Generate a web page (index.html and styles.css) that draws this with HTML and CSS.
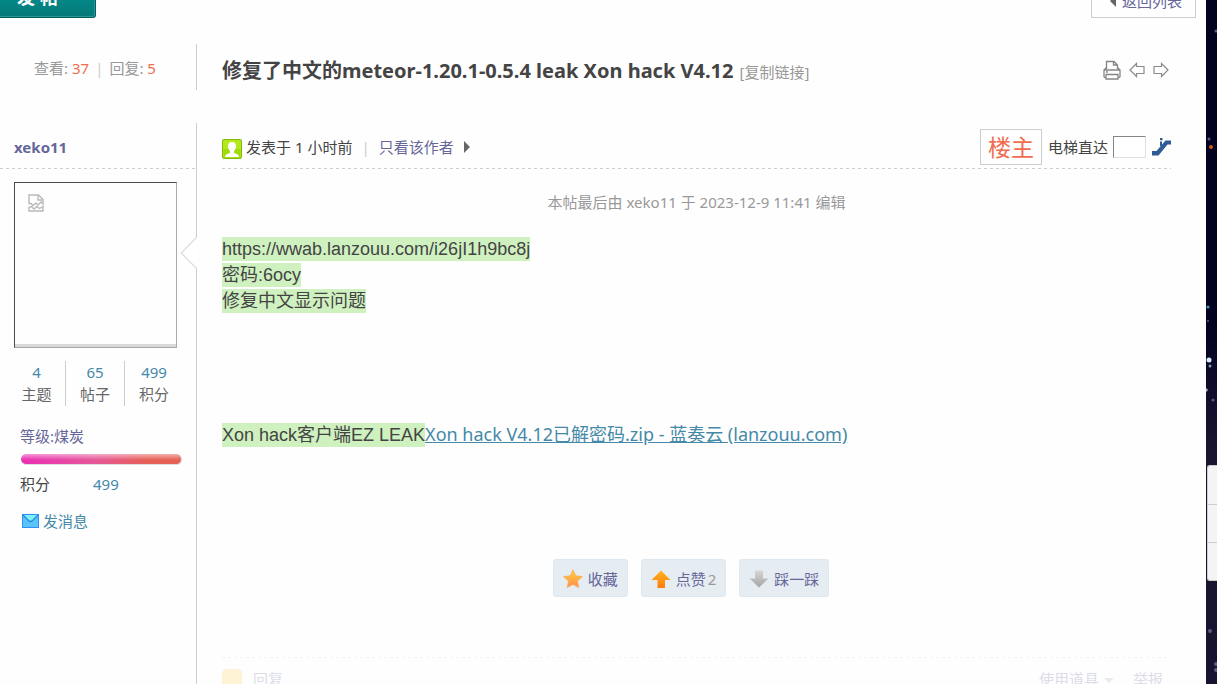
FILE: index.html
```html
<!DOCTYPE html>
<html lang="zh-CN">
<head>
<meta charset="utf-8">
<title>修复了中文的meteor-1.20.1-0.5.4 leak Xon hack V4.12</title>
<link rel="stylesheet" href="styles.css">
</head>
<body>
<div class="page">
  <main class="sheet">
    <div class="topbar">
      <button class="new-post" type="button">发 帖<span class="new-post-caret"></span></button>
      <a class="back" href="#"><span class="tri-left"></span>返回列表</a>
    </div>

    <header class="thread-head">
      <div class="counts">查看: <b>37</b><i>|</i>回复: <b>5</b></div>
      <div class="title-row">
        <h1 class="title">修复了中文的meteor-1.20.1-0.5.4 leak Xon hack V4.12</h1>
        <a class="copy" href="#">[复制链接]</a>
        <nav class="tools">
          <a href="#" aria-label="打印"><svg width="18" height="20" viewBox="0 0 18 20" fill="none" stroke="#858585" stroke-width="1.300"><path d="M3.500 9V1.500h7.500l3.500 3.500V9M10.500 1.500V5h4"/><path d="M3.500 7.500L1 10v6.500q0 1 1.500 1M14.500 7.500L17 10v6.500q0 1-1.500 1M1.500 10h15M3 12h2M3 14.500h12v4.500H3z"/></svg></a>
          <a href="#" aria-label="上一主题"><svg width="16" height="16" viewBox="0 0 16 16" fill="none" stroke="#8c8c8c" stroke-width="1.200"><path d="M1 8l6.500-6.500V4.500H15v7H7.500v3z"/></svg></a>
          <a href="#" aria-label="下一主题"><svg width="16" height="16" viewBox="0 0 16 16" fill="none" stroke="#8c8c8c" stroke-width="1.200"><path d="M15 8L8.500 1.500V4.500H1v7h7.500v3z"/></svg></a>
        </nav>
      </div>
    </header>

    <article class="post">
      <aside class="author">
        <div class="author-name"><a href="#">xeko11</a></div>
        <div class="author-body">
          <div class="avatar">
            <svg width="16" height="18" viewBox="0 0 16 18" fill="none" stroke="#b9b9b9" stroke-width="1.400"><path d="M1 9.500V1h9.500L15 5.500V10l-2-2-3 3-2-2-3 2.500-2-2z"/><path d="M10 1v5h5"/><path d="M1 17v-3.500l2.500-1L6 15l3-2.500 2.500 2L15 12.500V17z"/></svg>
          </div>
          <div class="stats">
            <div><a href="#">4</a><span>主题</span></div>
            <div><a href="#">65</a><span>帖子</span></div>
            <div><a href="#">499</a><span>积分</span></div>
          </div>
          <div class="level"><a href="#">等级:煤炭</a></div>
          <div class="bar"></div>
          <div class="score"><span>积分</span><a href="#">499</a></div>
          <a class="message" href="#"><svg width="17" height="14" viewBox="0 0 17 14"><rect width="17" height="14" fill="#2f8df5"/><rect x="1" y="1" width="15" height="12" fill="#58c4f8"/><path d="M1 1h15L10.500 6.500Q8.500 8.500 6.500 6.500z" fill="#7af3fd"/><path d="M1 1l5.500 5.500q2 2 4 0L16 1" fill="none" stroke="#2a86dc" stroke-width="1.200"/></svg>发消息</a>
        </div>
        <svg class="notch" width="17" height="32" viewBox="0 0 17 32"><path d="M17 0L1 16l16 16z" fill="#fff"/><path d="M16.500 .5L1.300 16 16.500 31.500" fill="none" stroke="#dcdcdc" stroke-width="1.200"/></svg>
      </aside>

      <section class="content">
        <div class="post-head">
          <svg class="face" width="20" height="20" viewBox="0 0 20 20"><rect x=".5" y=".5" width="19" height="19" rx="1.500" fill="#b2e81c" stroke="#84b80c"/><path d="M1.500 10h17v8.500h-17z" fill="#a0dc0a"/><path d="M3 18q0-3 5-4v-2Q6 10 6 7q0-4 4-4t4 4q0 3-2 5v2q5 1 5 4z" fill="#fff"/></svg>
          <span class="when">发表于 1 小时前</span>
          <span class="pipe">|</span>
          <a class="only" href="#">只看该作者</a>
          <span class="tri-right"></span>
          <span class="owner">楼主</span>
          <label class="jump-label" for="floor">电梯直达</label>
          <input class="jump" id="floor" type="text">
          <button class="go" type="button" aria-label="跳转"><svg width="19" height="18" viewBox="0 0 19 18"><path d="M0 13h4.500L13.500 2.500H19v4h-3.500L6.500 17.500H0z" fill="#2f5c96"/><path d="M8 0h2.500v2.200H8zM8 3.500h2v4.500H8z" fill="#2f5c96"/></svg></button>
        </div>
        <p class="edited">本帖最后由 xeko11 于 2023-12-9 11:41 编辑</p>
        <div class="text">
          <p><mark>https://wwab.lanzouu.com/i26jI1h9bc8j</mark></p>
          <p><mark>密码:6ocy</mark></p>
          <p><mark>修复中文显示问题</mark></p>
          <p class="download"><mark>Xon hack客户端EZ LEAK</mark><a href="#">Xon hack V4.12已解密码.zip - 蓝奏云 (lanzouu.com)</a></p>
        </div>
        <div class="actions">
          <button type="button"><svg width="20" height="20" viewBox="0 0 20 20"><defs><linearGradient id="star" x2="0" y2="1"><stop stop-color="#ffd23c"/><stop offset="1" stop-color="#ff8d50"/></linearGradient></defs><path d="M10 .8l2.800 6 6.600.8-4.900 4.500 1.300 6.500L10 15.400l-5.800 3.200 1.300-6.500L.6 7.600l6.600-.8z" fill="url(#star)" stroke="#f8ae58" stroke-width=".8" stroke-linejoin="round"/></svg>收藏</button>
          <button type="button"><svg width="20" height="20" viewBox="0 0 20 20"><defs><linearGradient id="up" x2="0" y2="1"><stop stop-color="#ffb31c"/><stop offset="1" stop-color="#ff7d0c"/></linearGradient></defs><path d="M10 1.500l9.500 9.500H14v8H6.500v-8H.5z" fill="url(#up)"/></svg>点赞<span class="num">2</span></button>
          <button type="button"><svg width="20" height="20" viewBox="0 0 20 20"><defs><linearGradient id="down" x2="0" y2="1"><stop stop-color="#d6d6d6"/><stop offset="1" stop-color="#a4a4a4"/></linearGradient></defs><path d="M10 18.500L.5 9.500H6v-8h8v8h5.500z" fill="url(#down)"/></svg>踩一踩</button>
        </div>
        <footer class="post-foot">
          <a class="reply" href="#"><span class="bubble"></span>回复</a>
          <a href="#">使用道具<span class="tri-down"></span></a>
          <a href="#">举报</a>
        </footer>
      </section>
    </article>
  </main>
  <div class="sky">
    <svg class="stars" width="11" height="684" viewBox="0 0 11 684"><g fill="#5c5c80"><circle cx="10" cy="31" r="1.500"/><circle cx="3" cy="139" r="1.500"/><circle cx="2" cy="321" r="1"/><circle cx="7" cy="400" r="1.500"/><circle cx="4" cy="631" r="2"/><circle cx="10" cy="664" r="2"/><circle cx="10" cy="670" r="2"/></g><circle cx="5" cy="147" r="2" fill="#c85b1c"/><circle cx="2" cy="307" r="1.600" fill="#4a8fc0"/><circle cx="3" cy="360" r="2.500" fill="#d8ecf8"/><circle cx="4" cy="366" r="1.500" fill="#7fa0b4"/><circle cx="0" cy="390" r="1.800" fill="#b0a8c0"/></svg>
    <nav class="side"><a href="#" aria-label="客服"></a><a href="#" aria-label="列表"></a><a href="#" aria-label="顶部"></a></nav>
  </div>
</div>
</body>
</html>
```

FILE: styles.css
```css
* { box-sizing: border-box; }
body {
  margin: 0;
  background: #fff;
  color: #444;
  font: 15px/22px "Noto Sans", "Noto Sans CJK SC", sans-serif;
}
h1, p { margin: 0; }
a { color: #666699; text-decoration: none; }
svg { display: block; flex: none; }
button { font: inherit; cursor: pointer; }

.page {
  display: grid;
  grid-template-columns: minmax(0, 1fr) 11px;
  height: 100vh;
  overflow: hidden;
}
.sheet {
  display: flex;
  flex-direction: column;
  min-height: 0;
  background: #fefefe;
}

.topbar {
  display: flex;
  flex: none;
  justify-content: space-between;
  align-items: flex-end;
  height: 18px;
  padding-right: 10px;
  overflow: hidden;
}
.new-post {
  display: flex;
  align-items: center;
  gap: 12px;
  width: 96px;
  height: 40px;
  padding: 0 0 2px 17px;
  border: 1px solid #006060;
  border-left: 0;
  border-radius: 0 0 3px 0;
  background: linear-gradient(#009a9a, #077878);
  box-shadow: inset -1px -1px 0 #2f9494;
  color: #fff;
  font-size: 18px;
  font-weight: bold;
  white-space: nowrap;
}
.new-post-caret {
  border: 4px solid transparent;
  border-top-color: #bfe0e0;
  border-bottom: 0;
}
.back {
  display: flex;
  align-items: center;
  gap: 6px;
  height: 34px;
  padding: 0 13px 0 18px;
  border: 1px solid #cdcdcd;
}
.tri-left {
  border: 6px solid transparent;
  border-right-color: #666;
  border-left: 0;
}

.thread-head {
  display: flex;
  flex: none;
  height: 46px;
  margin: 26px 0 33px;
}
.counts {
  flex: none;
  width: 197px;
  padding: 13px 6px 0 0;
  border-right: 1px solid #cdcdcd;
  color: #999;
  text-align: center;
}
.counts b { color: #f26c4f; font-weight: normal; }
.counts i { margin: 0 6px; color: #cdcdcd; font-style: normal; }
.title-row {
  display: flex;
  flex: 1;
  align-items: baseline;
  gap: 6px;
  padding: 13px 37px 0 25px;
}
.title { font-size: 20px; line-height: 28px; }
.copy { color: #999; }
.tools {
  display: flex;
  align-self: flex-start;
  align-items: center;
  gap: 8px;
  margin-left: auto;
  padding-top: 3px;
}

.post { display: flex; flex: 1; min-height: 0; }
.author {
  position: relative;
  flex: none;
  width: 197px;
  border-right: 1px solid #cdcdcd;
}
.notch { position: absolute; top: 114px; right: -1px; }
.author-name,
.post-head,
.post-foot {
  background: repeating-linear-gradient(90deg, #cdcdcd 0 3px, transparent 3px 6px) 0 100% / 100% 1px no-repeat;
}
.author-name {
  height: 46px;
  padding: 13px 14px 0;
  font-weight: bold;
}
.author-body { padding: 13px 14px 0; }
.avatar {
  width: 163px;
  height: 166px;
  padding: 11px 13px;
  border: 1px solid #4a4a4a;
  border-right-color: #aaa;
  border-bottom-color: #aaa;
  box-shadow: inset 0 -3px 0 #d8d8d8;
}
.stats {
  display: grid;
  grid-template-columns: 52px 59px 58px;
  margin: 13px -7px 0 0;
  text-align: center;
}
.stats div {
  display: flex;
  flex-direction: column;
  border-right: 1px solid #cdcdcd;
  height: 45px;
}
.stats div:first-child { padding-right: 6px; }
.stats div:last-child { border-right: 0; }
.stats a, .score a, .message { color: #4489a8; }
.stats span { color: #666; }
.level { margin: 19px 6px 0; }
.bar {
  height: 11px;
  margin: 7px 0 0 7px;
  border-radius: 6px;
  border-bottom: 1px solid #ddd;
  border-right: 1px solid #ddd;
  background: linear-gradient(rgba(255, 255, 255, .5), rgba(255, 255, 255, 0) 60%), linear-gradient(90deg, #ea2fb4, #e5569a 45%, #e66055 80%);
}
.score {
  display: grid;
  grid-template-columns: 73px 1fr;
  margin: 8px 6px 0;
}
.message {
  display: flex;
  align-items: center;
  gap: 4px;
  margin: 15px 8px 0;
}

.content {
  display: flex;
  flex: 1;
  flex-direction: column;
  min-width: 0;
  padding: 0 35px 0 25px;
}
.post-head {
  display: flex;
  flex: none;
  align-items: center;
  height: 46px;
  padding-top: 2px;
}
.face { margin-top: 3px; }
.when { margin-left: 4px; }
.pipe { margin: 0 9px; color: #cdcdcd; }
.tri-right {
  margin-left: 10px;
  border: 6px solid transparent;
  border-left-color: #666;
  border-right: 0;
}
.owner {
  margin: 0 6px 0 auto;
  padding: 0 7px;
  border: 1px solid #cdcdcd;
  color: #f26c4f;
  font-size: 23px;
  line-height: 34px;
}
.jump {
  width: 33px;
  height: 22px;
  margin: 0 6px 0 5px;
  padding: 0 3px;
  border: 1px solid #848484;
  border-right-color: #e0e0e0;
  border-bottom-color: #e0e0e0;
  background: #fff;
}
.go { padding: 0; border: 0; background: none; }
.edited {
  margin-top: 22px;
  color: #999;
  text-align: center;
}
.text {
  margin-top: 23px;
  font: 18px/26px "Liberation Sans", "Noto Sans CJK SC", sans-serif;
}
.text mark {
  padding: 2px 0;
  background: #cff1c0;
  color: #444;
}
.download { margin-top: 107px; }
.download a {
  color: #4489a8;
  font-family: "Noto Sans", "Noto Sans CJK SC", sans-serif;
  text-decoration: underline;
}
.actions {
  display: flex;
  justify-content: center;
  gap: 13px;
  margin: 111px 11px 0 0;
}
.actions button {
  display: flex;
  align-items: center;
  gap: 5px;
  height: 38px;
  padding: 2px 9px 0;
  border: 1px solid #dfe8ef;
  border-radius: 3px;
  background: #e5edf2;
  color: #666699;
}
.actions .num { margin-left: -3px; color: #999; }
.post-foot {
  display: flex;
  flex: none;
  align-items: center;
  gap: 19px;
  height: 42px;
  margin-top: 60px;
  padding: 1px 8px 0 0;
  background-position: 0 0;
  opacity: .22;
}
.reply { display: flex; align-items: center; gap: 11px; margin-right: auto; }
.bubble {
  width: 20px;
  height: 20px;
  border: 1px solid #ffc04d;
  border-radius: 4px;
  background: #ffd24a;
}
.tri-down {
  display: inline-block;
  margin-left: 5px;
  border: 5px solid transparent;
  border-top-color: #aaa;
  border-bottom: 0;
  vertical-align: middle;
}

.sky {
  position: relative;
  background: linear-gradient(#02011f, #020120 47%, #110d2b 58%, #1b162f 67%, #171330);
}
.stars { position: absolute; top: 0; left: 0; }
.side {
  position: absolute;
  top: 465px;
  left: 1px;
  right: 0;
  border: 1px solid #cdcdcd;
  border-right: 0;
  border-radius: 3px 0 0 3px;
  background: #f4f4f4;
}
.side a { display: block; height: 38px; }
.side a + a { border-top: 1px solid #cdcdcd; }
```
